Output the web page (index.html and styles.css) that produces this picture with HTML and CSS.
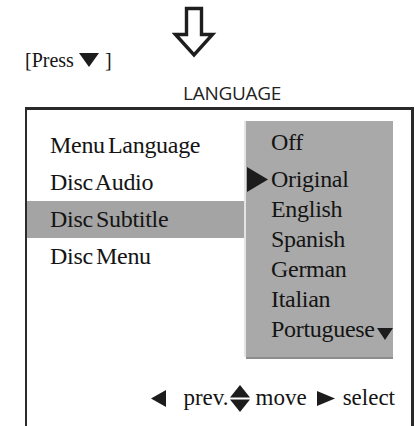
FILE: index.html
```html
<!DOCTYPE html>
<html lang="en">
<head>
  <meta charset="UTF-8" />
  <title>Language Setup</title>
  <link rel="stylesheet" href="styles.css">
</head>
<body>
  <div class="header">
    <div class="press">[Press<svg class="press-tri" width="20" height="14" viewBox="0 0 20 14"><polygon points="0,0 20,0 10,14" /></svg>]</div>
    <svg class="big-arrow" width="46" height="56" viewBox="0 0 46 56">
      <path d="M14.5 4.5 H29.5 V30.5 H40.5 L22 51 L3.5 30.5 H14.5 Z" />
    </svg>
  </div>

  <div class="title-wrap">
    <div class="title">LANGUAGE</div>
  </div>

  <div class="menu-box">
    <div class="cols">
      <ul class="left">
        <li>Menu Language</li>
        <li>Disc Audio</li>
        <li class="active">Disc Subtitle</li>
        <li>Disc Menu</li>
      </ul>
      <ul class="panel">
        <li class="first">Off</li>
        <li class="current">
          <svg class="cursor" width="21" height="25" viewBox="0 0 21 25"><polygon points="0,0 21,12.5 0,25" /></svg>Original
        </li>
        <li>English</li>
        <li>Spanish</li>
        <li>German</li>
        <li>Italian</li>
        <li>Portuguese<svg class="more" width="16" height="12" viewBox="0 0 16 12"><polygon points="0,0 16,0 8,12" /></svg></li>
      </ul>
    </div>

    <div class="footer">
      <svg class="f-left" width="15" height="17" viewBox="0 0 15 17"><polygon points="15,0 15,17 0,8.5" /></svg>
      <span class="f-prev">prev.</span>
      <svg class="f-move" width="20" height="27" viewBox="0 0 20 27"><polygon points="10,0 20,12.5 0,12.5" /><polygon points="0,14.5 20,14.5 10,27" /></svg>
      <span class="f-movetxt">move</span>
      <svg class="f-right" width="18" height="15" viewBox="0 0 18 15"><polygon points="0,0 18,7.5 0,15" /></svg>
      <span class="f-select">select</span>
    </div>
  </div>
</body>
</html>
```

FILE: styles.css
```css
html, body {
  margin: 0;
  padding: 0;
  overflow: hidden;
}
body {
  background: #fff;
  color: #141414;
  font-family: "Liberation Serif", "Times New Roman", serif;
}
svg {
  fill: #1c1c1c;
}

/* top: press hint + big arrow */
.header {
  display: flex;
  align-items: flex-start;
  height: 72px;
}
.press {
  margin-left: 25px;
  width: 147px;
  margin-top: 48px;
  font-size: 20px;
  line-height: 24px;
  white-space: nowrap;
}
.press-tri {
  margin: 0 6px 0 5px;
  vertical-align: 0;
}
.big-arrow {
  margin-top: 4px;
  display: block;
}
.big-arrow path {
  fill: #fff;
  stroke: #1e1e1e;
  stroke-width: 3.4;
  stroke-linejoin: miter;
}

.title-wrap {
  margin-left: 25px;
  width: 389px;
  padding-left: 25px;
  box-sizing: border-box;
}
.title {
  margin-top: 11px;
  margin-bottom: 4px;
  text-align: center;
  font-family: "Open Sans", "DejaVu Sans", sans-serif;
  font-size: 19px;
  line-height: 20px;
  letter-spacing: -0.3px;
  color: #222;
}

/* the menu frame */
.menu-box {
  margin-left: 25px;
  width: 389px;
  height: 340px;
  box-sizing: border-box;
  border-top: 3px solid #2a2a2a;
  border-left: 2px solid #2a2a2a;
  border-right: 3px solid #2a2a2a;
}
.cols {
  display: flex;
  padding-top: 11px;
}
ul {
  list-style: none;
  margin: 0;
  padding: 0;
  font-size: 24px;
  letter-spacing: -0.3px;
  word-spacing: -2.5px;
  white-space: nowrap;
}
.left {
  width: 219px;
  padding-top: 6px;
}
.left li {
  line-height: 37px;
  padding-left: 23px;
}
.left li.active {
  background: #a4a4a4;
}
.panel {
  width: 147px;
  box-sizing: border-box;
  margin-right: 18px;
  padding: 6px 0 13px 25px;
  background: #a9a9a9;
  box-shadow: 0 2px 0 #8c8c8c, -2px 0 0 #e4e4e4;
}
.panel li {
  line-height: 30px;
}
.panel li.first {
  margin-bottom: 7px;
}
.panel li.current {
  position: relative;
}
.cursor {
  position: absolute;
  left: -24px;
  top: 3px;
}
.more {
  margin-left: 2px;
  vertical-align: -3px;
}

/* key hints */
.footer {
  display: flex;
  align-items: center;
  justify-content: flex-end;
  margin-top: 26px;
  padding-right: 16px;
  font-size: 23px;
  line-height: 30px;
}
.f-prev {
  margin-left: 17px;
}
.f-move {
  margin-left: 1px;
}
.f-movetxt {
  margin-left: 6px;
}
.f-right {
  margin-left: 10px;
}
.f-select {
  margin-left: 8px;
}
```
